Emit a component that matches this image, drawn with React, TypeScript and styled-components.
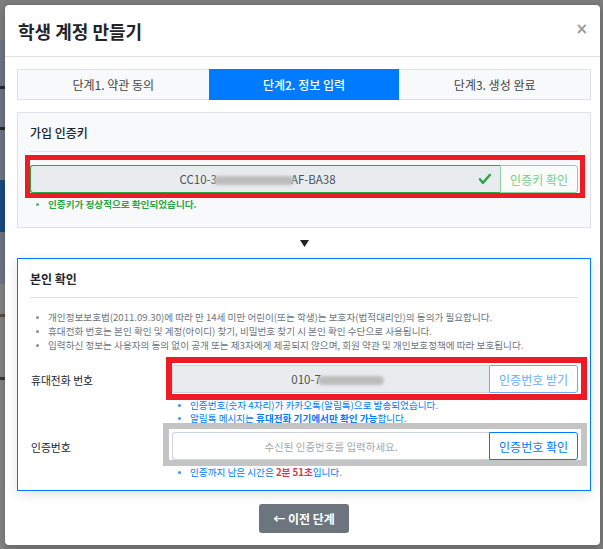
import React from "react";
import styled, { createGlobalStyle } from "styled-components";

const Global = createGlobalStyle`
  html, body { margin: 0; padding: 0; }
  body {
    background: #7e7e7e;
    font-family: "Noto Sans CJK KR", "Noto Sans", sans-serif;
    overflow: hidden;
  }
  * { box-sizing: border-box; }
`;

const Backdrop = styled.div`
  display: flex;
  align-items: flex-start;
  width: 603px;
  height: 549px;
  background: #7e7e7e;
`;

const Peek = styled.div`
  width: 5px;
  height: 549px;
  display: flex;
  flex-direction: column;
  flex-shrink: 0;
`;

const PeekBlock = styled.div<{ $h: number; $c: string }>`
  height: ${(p) => p.$h}px;
  background: ${(p) => p.$c};
  flex-shrink: 0;
`;

const Modal = styled.div`
  margin-top: 5px;
  width: 595px;
  height: 540px;
  background: #fff;
  border-radius: 4px;
  box-shadow: 0 2px 10px rgba(0, 0, 0, 0.25);
  display: flex;
  flex-direction: column;
  flex-shrink: 0;
`;

const Header = styled.div`
  display: flex;
  align-items: center;
  justify-content: space-between;
  padding: 14px 12px 13px 13px;
  border-bottom: 1px solid #dee2e6;
`;

const Title = styled.h1`
  margin: 0;
  font-size: 18px;
  line-height: 24px;
  font-weight: 700;
  color: #212529;
`;

const Close = styled.span`
  font-family: "DejaVu Sans", sans-serif;
  font-size: 15px;
  line-height: 20px;
  font-weight: 700;
  color: #999;
  margin-top: -4px;
`;

const Body = styled.div`
  padding: 12px 9px 12px 12px;
  display: flex;
  flex-direction: column;
`;

const Tabs = styled.div`
  display: grid;
  grid-template-columns: 1fr 1fr 1fr;
  border: 1px solid #dee2e6;
  background: #f8f9fa;
  height: 31px;
`;

const Tab = styled.div<{ $active?: boolean }>`
  display: flex;
  align-items: center;
  justify-content: center;
  font-size: 12px;
  color: ${(p) => (p.$active ? "#fff" : "#444")};
  background: ${(p) => (p.$active ? "#007bff" : "transparent")};
  font-weight: ${(p) => (p.$active ? 500 : 400)};
  margin: ${(p) => (p.$active ? "-1px 0" : "0")};
`;

const Section = styled.div<{ $focus?: boolean }>`
  border: 1px solid ${(p) => (p.$focus ? "#007bff" : "#dee2e6")};
  background: ${(p) => (p.$focus ? "#fff" : "#f8f9fa")};
  box-shadow: ${(p) => (p.$focus ? "0 3px 12px rgba(0,0,0,0.12)" : "none")};
  padding: 12px 12px ${(p) => (p.$focus ? "11px" : "16px")} 12px;
`;

const SectionHead = styled.div<{ $bold?: boolean }>`
  font-size: 12px;
  line-height: 16px;
  font-weight: ${(p) => (p.$bold ? 700 : 500)};
  color: #212529;
  padding-bottom: 10px;
  border-bottom: 1px solid #dee2e6;
`;

const TopGap = styled.div`
  height: 12px;
`;

const Annotated = styled.div`
  position: relative;
`;

const Mark = styled.div<{ $t: number; $r: number; $b: number; $l: number; $c: string; $w: number }>`
  position: absolute;
  top: ${(p) => p.$t}px;
  right: ${(p) => p.$r}px;
  bottom: ${(p) => p.$b}px;
  left: ${(p) => p.$l}px;
  border: ${(p) => p.$w}px solid ${(p) => p.$c};
  pointer-events: none;
`;

const InputGroup = styled.div`
  display: flex;
  height: 28px;
`;

const Field = styled.div<{ $tone: "valid" | "readonly" | "plain" }>`
  flex: 1;
  position: relative;
  display: flex;
  align-items: center;
  justify-content: center;
  font-size: 11.5px;
  color: #495057;
  background: ${(p) => (p.$tone === "plain" ? "#fff" : "#e9ecef")};
  border: 1px solid
    ${(p) => (p.$tone === "valid" ? "#28a745" : "#ced4da")};
  border-right: none;
  border-radius: 3px 0 0 3px;
  white-space: nowrap;
`;

const FieldText = styled.span<{ $shift: number }>`
  margin-left: ${(p) => p.$shift}px;
`;

const Placeholder = styled.span`
  color: #a4a8ac;
  font-size: 10.5px;
`;

const Blob = styled.span<{ $w: number }>`
  display: inline-block;
  width: ${(p) => p.$w}px;
  height: 9px;
  border-radius: 5px;
  background: #bcbcbc;
  filter: blur(1.5px);
  margin: 0 -3px;
  vertical-align: middle;
`;

const CheckIcon = styled.svg`
  position: absolute;
  right: 8px;
  top: 50%;
  margin-top: -7px;
  width: 14px;
  height: 14px;
`;

const GroupButton = styled.button<{ $tone: "success" | "primary"; $disabled?: boolean }>`
  font-family: inherit;
  font-size: 12px;
  padding: 0 9px;
  background: ${(p) => (p.$tone === "success" ? "#f9fcf9" : "#fff")};
  color: ${(p) =>
    p.$tone === "success" ? "#7ccb8d" : p.$disabled ? "#66aefc" : "#007bff"};
  border: 1px solid
    ${(p) =>
      p.$tone === "success" ? "#8fd19e" : p.$disabled ? "#66aefc" : "#007bff"};
  border-radius: 0 3px 3px 0;
  white-space: nowrap;
`;

const Notes = styled.ul<{ $color: string; $bold?: boolean; $lh: number; $top: number }>`
  margin: ${(p) => p.$top}px 0 0 0;
  padding: 0 0 0 18px;
  list-style: none;
  font-size: 9.6px;
  line-height: ${(p) => p.$lh}px;
  font-weight: ${(p) => (p.$bold ? 700 : 400)};
  color: ${(p) => p.$color};
  white-space: nowrap;
  li {
    position: relative;
  }
  li::before {
    content: "";
    position: absolute;
    left: -12px;
    top: ${(p) => p.$lh / 2 - 1.5}px;
    width: 3px;
    height: 3px;
    border-radius: 50%;
    background: currentColor;
    opacity: 0.8;
  }
`;

const Strong = styled.b<{ $color?: string }>`
  font-weight: 700;
  color: ${(p) => p.$color || "inherit"};
`;

const Arrow = styled.div`
  height: 30px;
  display: flex;
  align-items: center;
  justify-content: center;
`;

const FormRow = styled.div<{ $top: number }>`
  display: grid;
  grid-template-columns: 142px 1fr;
  margin-top: ${(p) => p.$top}px;
  align-items: start;
`;

const Label = styled.div`
  height: 28px;
  display: flex;
  align-items: center;
  font-size: 10.8px;
  color: #212529;
  padding-left: 1px;
  padding-top: 2px;
`;

const Footer = styled.div`
  display: flex;
  justify-content: center;
  margin-top: 13px;
`;

const BackButton = styled.button`
  font-family: inherit;
  height: 29px;
  width: 90px;
  border: none;
  border-radius: 3px;
  background: #6c757d;
  color: #fff;
  font-size: 12px;
  font-weight: 700;
`;

export default function App() {
  return (
    <>
      <Global />
      <Backdrop>
        <Peek>
          <PeekBlock $h={40} $c="#7f7f7f" />
          <PeekBlock $h={46} $c="#6e7684" />
          <PeekBlock $h={3} $c="#2a2a2a" />
          <PeekBlock $h={38} $c="#6e7684" />
          <PeekBlock $h={3} $c="#2a2a2a" />
          <PeekBlock $h={50} $c="#6e7684" />
          <PeekBlock $h={52} $c="#1c4a84" />
          <PeekBlock $h={52} $c="#6f7782" />
          <PeekBlock $h={30} $c="#858585" />
          <PeekBlock $h={3} $c="#5a4a3a" />
          <PeekBlock $h={60} $c="#858585" />
          <PeekBlock $h={3} $c="#3a3a3a" />
          <PeekBlock $h={169} $c="#858585" />
        </Peek>
        <Modal>
          <Header>
            <Title>학생 계정 만들기</Title>
            <Close>×</Close>
          </Header>
          <Body>
            <Tabs>
              <Tab>단계1. 약관 동의</Tab>
              <Tab $active>단계2. 정보 입력</Tab>
              <Tab>단계3. 생성 완료</Tab>
            </Tabs>
            <TopGap />
            <Section>
              <SectionHead>가입 인증키</SectionHead>
              <Annotated style={{ marginTop: 13 }}>
                <InputGroup>
                  <Field $tone="valid">
                    <FieldText $shift={-16}>
                      CC10-3<Blob $w={80} />AF-BA38
                    </FieldText>
                    <CheckIcon viewBox="0 0 8 8">
                      <path
                        fill="#28a745"
                        d="M2.3 6.73L.6 4.53c-.4-1.04.46-1.4 1.1-.8l1.1 1.4 3.4-3.8c.6-.63 1.6-.27 1.2.7l-4 4.6c-.43.5-.8.4-1.1.1z"
                      />
                    </CheckIcon>
                  </Field>
                  <GroupButton $tone="success" $disabled>
                    인증키 확인
                  </GroupButton>
                </InputGroup>
                <Mark $t={-10} $r={-7} $b={-5} $l={-5} $w={5} $c="#ed1c24" />
              </Annotated>
              <Notes $color="#28a745" $bold $lh={14} $top={4}>
                <li>인증키가 정상적으로 확인되었습니다.</li>
              </Notes>
            </Section>
            <Arrow>
              <svg width="9" height="7" viewBox="0 0 9 7">
                <polygon points="0,0 9,0 4.5,7" fill="#222" />
              </svg>
            </Arrow>
            <Section $focus>
              <SectionHead $bold>본인 확인</SectionHead>
              <Notes $color="#6c757d" $lh={14} $top={12}>
                <li>
                  개인정보보호법(2011.09.30)에 따라 만 14세 미만 어린이(또는
                  학생)는 보호자(법적대리인)의 동의가 필요합니다.
                </li>
                <li>
                  휴대전화 번호는 본인 확인 및 계정(아이디) 찾기, 비밀번호 찾기
                  시 본인 확인 수단으로 사용됩니다.
                </li>
                <li>
                  입력하신 정보는 사용자의 동의 없이 공개 또는 제3자에게
                  제공되지 않으며, 회원 약관 및 개인보호정책에 따라 보호됩니다.
                </li>
              </Notes>
              <FormRow $top={13}>
                <Label>휴대전화 번호</Label>
                <div>
                  <Annotated>
                    <InputGroup>
                      <Field $tone="readonly">
                        <FieldText $shift={10}>
                          010-7<Blob $w={66} />
                        </FieldText>
                      </Field>
                      <GroupButton $tone="primary" $disabled>
                        인증번호 받기
                      </GroupButton>
                    </InputGroup>
                    <Mark $t={-8} $r={-9} $b={-7} $l={-6} $w={6} $c="#ed1c24" />
                  </Annotated>
                  <Notes $color="#007bff" $lh={13} $top={6}>
                    <li>인증번호(숫자 4자리)가 카카오톡(알림톡)으로 발송되었습니다.</li>
                    <li>
                      알림톡 메시지는 <Strong>휴대전화 기기에서만 확인 가능</Strong>
                      합니다.
                    </li>
                  </Notes>
                </div>
              </FormRow>
              <FormRow $top={7}>
                <Label>인증번호</Label>
                <div>
                  <Annotated>
                    <InputGroup>
                      <Field $tone="plain">
                        <Placeholder>수신된 인증번호를 입력하세요.</Placeholder>
                      </Field>
                      <GroupButton $tone="primary">인증번호 확인</GroupButton>
                    </InputGroup>
                    <Mark $t={-9} $r={-9} $b={-6} $l={-9} $w={6} $c="#c4c4c4" />
                  </Annotated>
                  <Notes $color="#007bff" $lh={13} $top={6}>
                    <li>
                      인증까지 남은 시간은 <Strong $color="#dc3545">2분 51초</Strong>
                      입니다.
                    </li>
                  </Notes>
                </div>
              </FormRow>
            </Section>
            <Footer>
              <BackButton>← 이전 단계</BackButton>
            </Footer>
          </Body>
        </Modal>
      </Backdrop>
    </>
  );
}
